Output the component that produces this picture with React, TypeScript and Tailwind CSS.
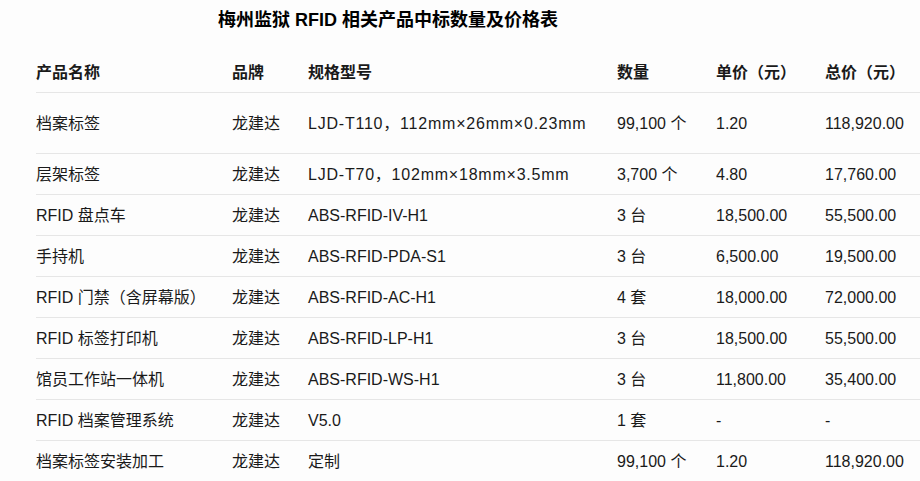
import React from "react";

const rows: [string, string, string, string, string, string][] = [
  ["档案标签", "龙建达", "LJD-T110，112mm×26mm×0.23mm", "99,100 个", "1.20", "118,920.00"],
  ["层架标签", "龙建达", "LJD-T70，102mm×18mm×3.5mm", "3,700 个", "4.80", "17,760.00"],
  ["RFID 盘点车", "龙建达", "ABS-RFID-IV-H1", "3 台", "18,500.00", "55,500.00"],
  ["手持机", "龙建达", "ABS-RFID-PDA-S1", "3 台", "6,500.00", "19,500.00"],
  ["RFID 门禁（含屏幕版）", "龙建达", "ABS-RFID-AC-H1", "4 套", "18,000.00", "72,000.00"],
  ["RFID 标签打印机", "龙建达", "ABS-RFID-LP-H1", "3 台", "18,500.00", "55,500.00"],
  ["馆员工作站一体机", "龙建达", "ABS-RFID-WS-H1", "3 台", "11,800.00", "35,400.00"],
  ["RFID 档案管理系统", "龙建达", "V5.0", "1 套", "-", "-"],
  ["档案标签安装加工", "龙建达", "定制", "99,100 个", "1.20", "118,920.00"],
];

const headers = ["产品名称", "品牌", "规格型号", "数量", "单价（元）", "总价（元）"];

const grid = "grid grid-cols-[196px_76px_309px_99px_109px_1fr] items-center";

export default function App() {
  return (
    <div className="w-[920px] h-[481px] overflow-hidden bg-[#fdfdfd] text-[#1a1a1a] font-['Liberation_Sans','Noto_Sans_CJK_SC',sans-serif]">
      <div className="pl-[218px] pt-[8px] h-[52px] text-[18px] font-bold text-black leading-[24px]">
        梅州监狱 RFID 相关产品中标数量及价格表
      </div>
      <div className="ml-[36px] text-[16px]">
        <div className={`${grid} h-[41px] pt-[1px] font-bold border-b border-[#e6e6e6]`}>
          {headers.map((h) => (
            <div key={h} className="whitespace-nowrap">{h}</div>
          ))}
        </div>
        {rows.map((r, i) => (
          <div
            key={i}
            className={`${grid} ${i === 0 ? "h-[61px] pt-[2px]" : "h-[41px] pt-[1px]"} border-b border-[#e6e6e6]`}
          >
            {r.map((c, j) => (
              <div
                key={j}
                className={`whitespace-nowrap ${j === 2 && c.includes("mm") ? "tracking-[0.78px]" : ""}`}
              >
                {c}
              </div>
            ))}
          </div>
        ))}
      </div>
    </div>
  );
}
